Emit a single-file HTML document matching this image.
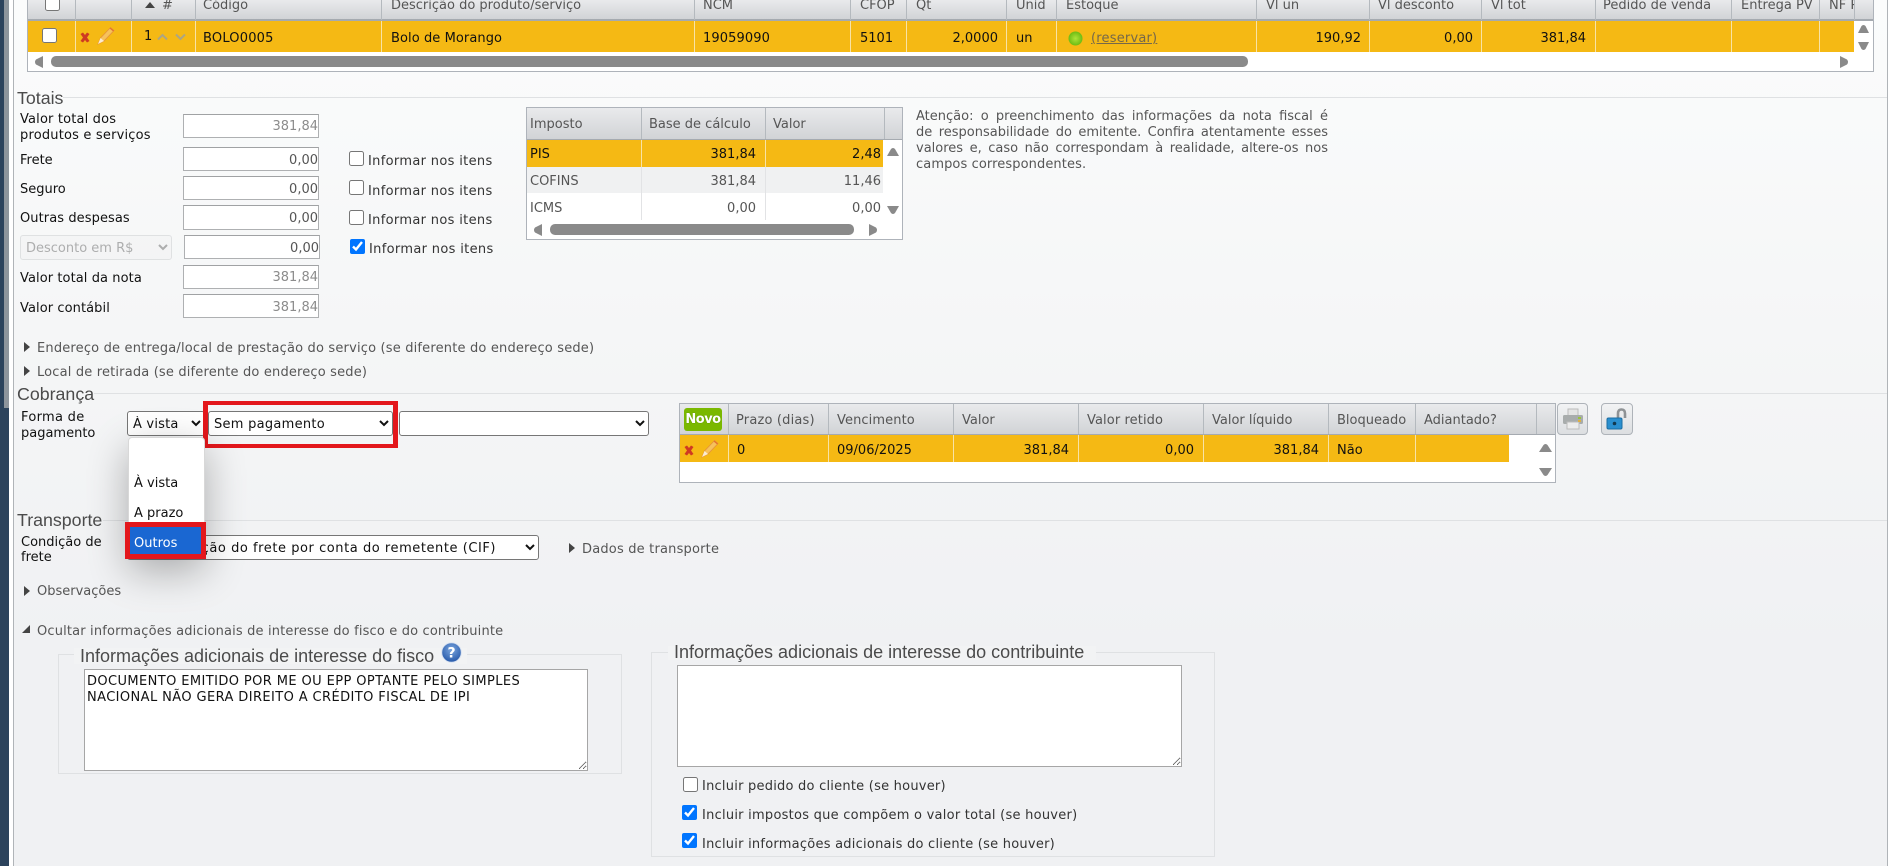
<!DOCTYPE html>
<html lang="pt-BR"><head><meta charset="utf-8"><title>Nota fiscal</title>
<style>
html,body{margin:0;padding:0;width:1890px;height:866px;overflow:hidden;background:#fff}
body{position:relative;font:13px/16px "DejaVu Sans",sans-serif;color:#222}
div,span,svg,input,select,textarea{position:absolute;box-sizing:border-box}
.t{white-space:nowrap;font:13px/16px "DejaVu Sans",sans-serif;margin-top:1px}
.r{text-align:right}
.g{color:#555}
.k{color:#111}
.leg{white-space:nowrap;font:17.8px/20px "Liberation Sans",sans-serif;color:#4b4b4b}
.hr{height:1px;background:#dfe1e3}
.in{background:#fff;border:1px solid #aeb0b2;border-top-color:#a0a2a4;text-align:right;color:#555;font:13px/24px "DejaVu Sans",sans-serif;padding-right:0}
.in.dis{color:#8c8c8c}
.hd{background:linear-gradient(#e9eaec,#d1d3d6)}
.vs{width:1px;background:#b4b9be}
.vw{width:1px;background:#f8e3a6}
.cb{margin:0;accent-color:#0075ff;width:15px;height:15px}
select{margin:0;background:#fff;border:1px solid #767676;border-radius:3px;font:13px "DejaVu Sans",sans-serif;color:#111;padding:2px 0 0 1px}
.red{border:solid #e3171c}
.tri{width:0;height:0;border-style:solid;border-color:transparent transparent transparent #444;border-width:5px 0 5px 6px}
.fs{border:1px solid #dfe1e3}
textarea{margin:0;background:#fff;border:1px solid #a6a6a6;font:13px/16px "DejaVu Sans",sans-serif;color:#111;padding:4px 2px;resize:both;border-radius:0;letter-spacing:.4px;overflow:hidden}
.btn{background:linear-gradient(#f2f3f4,#dcdee1);border:1px solid #aeb3b9;border-radius:4px}
.at{left:916px;width:412px;white-space:normal;text-align:justify;text-align-last:justify;color:#555;font:13px/16px "DejaVu Sans",sans-serif}
</style></head><body>

<!-- left strip + page bg -->
<div style="left:0;top:0;width:9px;height:866px;background:#2c435c"></div>
<div style="left:4px;top:0;width:5px;height:408px;background:#8e959c"></div>
<div style="left:9px;top:0;width:4px;height:866px;background:#fff"></div>
<div style="left:13px;top:0;width:1875px;height:866px;background:linear-gradient(#fbfcfc,#f4f5f6 45%,#f0f1f3 75%);border-left:1px solid #b0b4b8;border-right:1px solid #b0b4b8"></div>

<!-- top table -->
<div style="left:27px;top:0;width:1847px;height:72px;background:#fff;border:1px solid #aeb3ba;border-top:0"></div>
<div class="hd" style="left:28px;top:0;width:1845px;height:21px;border-bottom:2px solid #a5aab0"></div>
<div style="left:28px;top:21px;width:1826px;height:31px;background:#f5b914"></div>
<div class="vs" style="left:75px;top:0;height:20px"></div><div class="vs" style="left:131px;top:0;height:20px"></div><div class="vs" style="left:195px;top:0;height:20px"></div><div class="vs" style="left:381px;top:0;height:20px"></div><div class="vs" style="left:694px;top:0;height:20px"></div><div class="vs" style="left:850px;top:0;height:20px"></div><div class="vs" style="left:906px;top:0;height:20px"></div><div class="vs" style="left:1006px;top:0;height:20px"></div><div class="vs" style="left:1056px;top:0;height:20px"></div><div class="vs" style="left:1256px;top:0;height:20px"></div><div class="vs" style="left:1369px;top:0;height:20px"></div><div class="vs" style="left:1481px;top:0;height:20px"></div><div class="vs" style="left:1595px;top:0;height:20px"></div><div class="vs" style="left:1731px;top:0;height:20px"></div><div class="vs" style="left:1819px;top:0;height:20px"></div><div class="vs" style="left:1854px;top:0;height:20px"></div>
<div class="vw" style="left:75px;top:21px;height:31px"></div><div class="vw" style="left:131px;top:21px;height:31px"></div><div class="vw" style="left:195px;top:21px;height:31px"></div><div class="vw" style="left:381px;top:21px;height:31px"></div><div class="vw" style="left:694px;top:21px;height:31px"></div><div class="vw" style="left:850px;top:21px;height:31px"></div><div class="vw" style="left:906px;top:21px;height:31px"></div><div class="vw" style="left:1006px;top:21px;height:31px"></div><div class="vw" style="left:1056px;top:21px;height:31px"></div><div class="vw" style="left:1256px;top:21px;height:31px"></div><div class="vw" style="left:1369px;top:21px;height:31px"></div><div class="vw" style="left:1481px;top:21px;height:31px"></div><div class="vw" style="left:1595px;top:21px;height:31px"></div><div class="vw" style="left:1731px;top:21px;height:31px"></div><div class="vw" style="left:1819px;top:21px;height:31px"></div>
<input type="checkbox" class="cb" style="left:45px;top:-4px">
<input type="checkbox" class="cb" style="left:42px;top:28px">
<svg style="left:145px;top:2px" width="10" height="6"><path d="M0 6L5 0L10 6Z" fill="#444"/></svg>
<span class="t g" style="left:162px;top:-3px">#</span>
<span class="t g" style="left:203px;top:-3px">Código</span>
<span class="t g" style="left:391px;top:-3px">Descrição do produto/serviço</span>
<span class="t g" style="left:703px;top:-3px">NCM</span>
<span class="t g" style="left:860px;top:-3px">CFOP</span>
<span class="t g" style="left:916px;top:-3px">Qt</span>
<span class="t g" style="left:1016px;top:-3px">Unid</span>
<span class="t g" style="left:1066px;top:-3px">Estoque</span>
<span class="t g" style="left:1266px;top:-3px">Vl un</span>
<span class="t g" style="left:1378px;top:-3px">Vl desconto</span>
<span class="t g" style="left:1491px;top:-3px">Vl tot</span>
<span class="t g" style="left:1603px;top:-3px">Pedido de venda</span>
<span class="t g" style="left:1741px;top:-3px">Entrega PV</span>
<div style="left:1829px;top:0;width:25px;height:20px;overflow:hidden"><span class="t g" style="left:0;top:-3px">NF Pedido</span></div>

<svg style="left:80px;top:32px" width="10" height="11"><path d="M.5 2L3 .5L5 3L7 .5L9.5 2L7 5.5L9.5 9L7 10.5L5 8L3 10.5L.5 9L3 5.5Z" fill="#cf3a22"/></svg>
<svg style="left:96px;top:26px" width="20" height="20"><path d="M2 18L4.5 12L14.5 1.5L18 4.5L8 15Z" fill="#f6c25c" stroke="#e6923a" stroke-width=".8"/><path d="M2 18L4.5 12L8 15Z" fill="#fbecd0"/><path d="M14 2L17.6 5" stroke="#e5752f" stroke-width="1.4"/></svg>
<span class="t k" style="left:144px;top:28px">1</span>
<svg style="left:157px;top:33px" width="11" height="8"><path d="M1 6.5L5.5 2L10 6.5" fill="none" stroke="#aca584" stroke-width="2"/></svg>
<svg style="left:175px;top:33px" width="11" height="8"><path d="M1 1.5L5.5 6L10 1.5" fill="none" stroke="#aca584" stroke-width="2"/></svg>
<span class="t k" style="left:203px;top:30px;letter-spacing:.2px">BOLO0005</span>
<span class="t k" style="left:391px;top:30px;letter-spacing:.08px">Bolo de Morango</span>
<span class="t k" style="left:703px;top:30px;letter-spacing:.1px">19059090</span>
<span class="t k" style="left:860px;top:30px">5101</span>
<span class="t k r" style="left:906px;top:30px;width:92px">2,0000</span>
<span class="t k" style="left:1016px;top:30px">un</span>
<svg style="left:1068px;top:31px" width="15" height="15"><defs><radialGradient id="led"><stop offset="0" stop-color="#aee338"/><stop offset="1" stop-color="#6cbc14"/></radialGradient></defs><circle cx="7.5" cy="7.5" r="7" fill="url(#led)"/></svg>
<span class="t" style="left:1091px;top:30px;color:#75684a;text-decoration:underline;letter-spacing:.2px">(reservar)</span>
<span class="t k r" style="left:1256px;top:30px;width:105px">190,92</span>
<span class="t k r" style="left:1369px;top:30px;width:104px">0,00</span>
<span class="t k r" style="left:1481px;top:30px;width:105px">381,84</span>
<svg style="left:34px;top:56px" width="10" height="12"><path d="M9 0V12L2 8.5Q0 6 2 3.5Z" fill="#8a8a8a"/></svg>
<div style="left:51px;top:56px;width:1197px;height:11px;background:#8a8a8a;border-radius:5px"></div>
<svg style="left:1839px;top:56px" width="10" height="12"><path d="M1 0V12L8 8.5Q10 6 8 3.5Z" fill="#8a8a8a"/></svg>
<svg style="left:1858px;top:24px" width="11" height="10"><path d="M0 9L3.5 2Q5.5 0 7.5 2L11 9Z" fill="#8a8a8a"/></svg>
<svg style="left:1858px;top:41px" width="11" height="10"><path d="M0 1L3.5 8Q5.5 10 7.5 8L11 1Z" fill="#8a8a8a"/></svg>

<!-- Totais -->
<div class="hr" style="left:63px;top:97px;width:1824px"></div>
<span class="leg" style="left:17px;top:88px">Totais</span>
<span class="t k" style="left:20px;top:111px;letter-spacing:.16px">Valor total dos</span>
<span class="t k" style="left:20px;top:127px;letter-spacing:.19px">produtos e serviços</span>
<span class="t k" style="left:20px;top:152px">Frete</span>
<span class="t k" style="left:20px;top:181px">Seguro</span>
<span class="t k" style="left:20px;top:210px;letter-spacing:.08px">Outras despesas</span>
<span class="t k" style="left:20px;top:270px;letter-spacing:.08px">Valor total da nota</span>
<span class="t k" style="left:20px;top:300px;letter-spacing:.08px">Valor contábil</span>
<div class="in dis" style="left:183px;top:114px;width:136px;height:24px">381,84</div>
<div class="in" style="left:183px;top:147px;width:136px;height:24px;line-height:26px">0,00</div>
<div class="in" style="left:183px;top:176px;width:136px;height:24px;line-height:26px">0,00</div>
<div class="in" style="left:183px;top:205px;width:136px;height:25px;line-height:26px">0,00</div>
<select disabled style="left:20px;top:235px;width:152px;height:25px;border-color:#d6d8da;background:#f3f4f5;color:#8f8f8f"><option>Desconto em R$</option></select>
<div class="in" style="left:184px;top:235px;width:136px;height:24px;line-height:26px">0,00</div>
<div class="in dis" style="left:183px;top:265px;width:136px;height:24px">381,84</div>
<div class="in dis" style="left:183px;top:294px;width:136px;height:24px;line-height:26px">381,84</div>
<input type="checkbox" class="cb" style="left:349px;top:151px"><span class="t k" style="left:368px;top:153px;color:#333;letter-spacing:.33px">Informar nos itens</span>
<input type="checkbox" class="cb" style="left:349px;top:180px"><span class="t k" style="left:368px;top:183px;color:#333;letter-spacing:.33px">Informar nos itens</span>
<input type="checkbox" class="cb" style="left:349px;top:210px"><span class="t k" style="left:368px;top:212px;color:#333;letter-spacing:.33px">Informar nos itens</span>
<input type="checkbox" class="cb" checked style="left:350px;top:239px"><span class="t k" style="left:369px;top:241px;color:#333;letter-spacing:.33px">Informar nos itens</span>

<!-- imposto table -->
<div style="left:526px;top:107px;width:377px;height:133px;background:#fff;border:1px solid #aeb3ba"></div>
<div class="hd" style="left:527px;top:108px;width:375px;height:32px;border-bottom:1px solid #a5aab0"></div>
<div style="left:527px;top:140px;width:356px;height:27px;background:#f5b914"></div>
<div style="left:527px;top:167px;width:356px;height:26px;background:#f0f1f2"></div>
<div class="vs" style="left:641px;top:108px;height:31px"></div><div class="vs" style="left:765px;top:108px;height:31px"></div><div class="vs" style="left:884px;top:108px;height:31px"></div>
<div class="vw" style="left:641px;top:140px;height:27px"></div><div class="vw" style="left:765px;top:140px;height:27px"></div>
<div style="left:641px;top:167px;height:53px;width:1px;background:#e2e3e5"></div><div style="left:765px;top:167px;height:53px;width:1px;background:#e2e3e5"></div>
<span class="t g" style="left:530px;top:116px">Imposto</span>
<span class="t g" style="left:649px;top:116px">Base de cálculo</span>
<span class="t g" style="left:773px;top:116px">Valor</span>
<span class="t k" style="left:530px;top:146px">PIS</span>
<span class="t k r" style="left:641px;top:146px;width:115px">381,84</span>
<span class="t k r" style="left:765px;top:146px;width:116px">2,48</span>
<span class="t g" style="left:530px;top:173px">COFINS</span>
<span class="t g r" style="left:641px;top:173px;width:115px">381,84</span>
<span class="t g r" style="left:765px;top:173px;width:116px">11,46</span>
<span class="t g" style="left:530px;top:200px">ICMS</span>
<span class="t g r" style="left:641px;top:200px;width:115px">0,00</span>
<span class="t g r" style="left:765px;top:200px;width:116px">0,00</span>
<svg style="left:887px;top:147px" width="12" height="10"><path d="M0 9L4 2Q6 0 8 2L12 9Z" fill="#8a8a8a"/></svg>
<svg style="left:887px;top:205px" width="12" height="10"><path d="M0 1L4 8Q6 10 8 8L12 1Z" fill="#8a8a8a"/></svg>
<svg style="left:533px;top:224px" width="10" height="12"><path d="M9 0V12L2 8.5Q0 6 2 3.5Z" fill="#8a8a8a"/></svg>
<div style="left:550px;top:224px;width:304px;height:11px;background:#8a8a8a;border-radius:5px"></div>
<svg style="left:868px;top:224px" width="10" height="12"><path d="M1 0V12L8 8.5Q10 6 8 3.5Z" fill="#8a8a8a"/></svg>

<div class="at" style="top:109px">Atenção: o preenchimento das informações da nota fiscal é</div>
<div class="at" style="top:125px">de responsabilidade do emitente. Confira atentamente esses</div>
<div class="at" style="top:141px">valores e, caso não correspondam à realidade, altere-os nos</div>
<div class="at" style="top:157px;text-align-last:left;letter-spacing:.1px">campos correspondentes.</div>

<!-- expanders -->
<div class="tri" style="left:24px;top:342px"></div>
<span class="t g" style="left:37px;top:340px;letter-spacing:.18px">Endereço de entrega/local de prestação do serviço (se diferente do endereço sede)</span>
<div class="tri" style="left:24px;top:366px"></div>
<span class="t g" style="left:37px;top:364px;letter-spacing:.17px">Local de retirada (se diferente do endereço sede)</span>

<!-- Cobrança -->
<div class="hr" style="left:94px;top:393px;width:1793px"></div>
<span class="leg" style="left:17px;top:384px">Cobrança</span>
<span class="t k" style="left:21px;top:409px;letter-spacing:.3px">Forma de</span>
<span class="t k" style="left:21px;top:425px">pagamento</span>
<select style="left:127px;top:411px;width:78px;height:25px;letter-spacing:.2px"><option>À vista</option></select>
<select style="left:208px;top:411px;width:185px;height:25px;letter-spacing:.27px"><option>Sem pagamento</option></select>
<select style="left:399px;top:411px;width:250px;height:25px"><option></option></select>
<div class="red" style="left:203px;top:401px;width:195px;height:47px;border-width:4px 5px"></div>

<!-- parcelas -->
<div style="left:679px;top:403px;width:877px;height:80px;background:#fff;border:1px solid #aeb3ba"></div>
<div class="hd" style="left:680px;top:404px;width:875px;height:31px;border-bottom:1px solid #a5aab0"></div>
<div style="left:680px;top:435px;width:829px;height:27px;background:#f5b914"></div>
<div class="vs" style="left:728px;top:404px;height:30px"></div><div class="vs" style="left:828px;top:404px;height:30px"></div><div class="vs" style="left:953px;top:404px;height:30px"></div><div class="vs" style="left:1078px;top:404px;height:30px"></div><div class="vs" style="left:1203px;top:404px;height:30px"></div><div class="vs" style="left:1328px;top:404px;height:30px"></div><div class="vs" style="left:1415px;top:404px;height:30px"></div><div class="vs" style="left:1536px;top:404px;height:30px"></div>
<div class="vw" style="left:728px;top:435px;height:27px"></div><div class="vw" style="left:828px;top:435px;height:27px"></div><div class="vw" style="left:953px;top:435px;height:27px"></div><div class="vw" style="left:1078px;top:435px;height:27px"></div><div class="vw" style="left:1203px;top:435px;height:27px"></div><div class="vw" style="left:1328px;top:435px;height:27px"></div><div class="vw" style="left:1415px;top:435px;height:27px"></div>
<div style="left:684px;top:408px;width:38px;height:23px;background:#7ab800;border-radius:3px;color:#fff;font:bold 13px/23px 'DejaVu Sans',sans-serif;text-align:center;white-space:nowrap;letter-spacing:-.5px;text-shadow:0 0 1px #4d7a00">Novo</div>
<span class="t g" style="left:736px;top:412px;letter-spacing:.18px">Prazo (dias)</span>
<span class="t g" style="left:837px;top:412px;letter-spacing:.1px">Vencimento</span>
<span class="t g" style="left:962px;top:412px">Valor</span>
<span class="t g" style="left:1087px;top:412px;letter-spacing:.1px">Valor retido</span>
<span class="t g" style="left:1212px;top:412px">Valor líquido</span>
<span class="t g" style="left:1337px;top:412px">Bloqueado</span>
<span class="t g" style="left:1424px;top:412px">Adiantado?</span>
<svg style="left:684px;top:445px" width="10" height="11"><path d="M.5 2L3 .5L5 3L7 .5L9.5 2L7 5.5L9.5 9L7 10.5L5 8L3 10.5L.5 9L3 5.5Z" fill="#cf3a22"/></svg>
<svg style="left:700px;top:439px" width="20" height="20"><path d="M2 18L4.5 12L14.5 1.5L18 4.5L8 15Z" fill="#f6c25c" stroke="#e6923a" stroke-width=".8"/><path d="M2 18L4.5 12L8 15Z" fill="#fbecd0"/><path d="M14 2L17.6 5" stroke="#e5752f" stroke-width="1.4"/></svg>
<span class="t k" style="left:737px;top:442px">0</span>
<span class="t k" style="left:837px;top:442px">09/06/2025</span>
<span class="t k r" style="left:953px;top:442px;width:116px">381,84</span>
<span class="t k r" style="left:1078px;top:442px;width:116px">0,00</span>
<span class="t k r" style="left:1203px;top:442px;width:116px">381,84</span>
<span class="t k" style="left:1337px;top:442px">Não</span>
<svg style="left:1539px;top:443px" width="13" height="10"><path d="M0 9L4.5 2Q6.5 0 8.5 2L13 9Z" fill="#8a8a8a"/></svg>
<svg style="left:1539px;top:467px" width="13" height="10"><path d="M0 1L4.5 8Q6.5 10 8.5 8L13 1Z" fill="#8a8a8a"/></svg>
<div class="btn" style="left:1557px;top:403px;width:31px;height:32px"></div>
<svg style="left:1562px;top:408px" width="22" height="22"><rect x="6" y="1" width="10" height="7" fill="#e4e4e4" stroke="#bbb"/><rect x="1" y="7" width="20" height="9" rx="1.5" fill="#a8acac"/><rect x="5" y="14" width="12" height="7" fill="#ececec" stroke="#bbb"/><rect x="16" y="9" width="3" height="2" fill="#9bc43a"/><rect x="16" y="12" width="3" height="2" fill="#e0b040"/></svg>
<div class="btn" style="left:1601px;top:403px;width:32px;height:32px"></div>
<svg style="left:1606px;top:408px" width="22" height="23"><path d="M12 11V5.5Q12 1.5 15.5 1.5Q19 1.5 19 5.5V10" fill="none" stroke="#8e9295" stroke-width="2.6"/><rect x="1" y="10" width="15" height="11" rx="1.5" fill="#2a8fcf" stroke="#1b6da3"/><circle cx="8.5" cy="15.5" r="1.8" fill="#12384f"/></svg>

<!-- Transporte -->
<div class="hr" style="left:103px;top:520px;width:1784px"></div>
<span class="leg" style="left:17px;top:510px">Transporte</span>
<span class="t k" style="left:21px;top:534px">Condição de</span>
<span class="t k" style="left:21px;top:549px">frete</span>
<select style="left:127px;top:535px;width:412px;height:25px"><option></option></select>
<span class="t k r" style="left:127px;top:540px;width:369px;letter-spacing:.55px">Contratação do frete por conta do remetente (CIF)</span>
<div class="tri" style="left:569px;top:543px"></div>
<span class="t g" style="left:582px;top:541px;letter-spacing:.19px">Dados de transporte</span>
<div class="tri" style="left:24px;top:586px"></div>
<span class="t g" style="left:37px;top:583px">Observações</span>

<!-- dropdown -->
<div style="left:128px;top:437px;width:77px;height:122px;background:#fff;border:1px solid #d8d8d8;border-radius:4px 4px 0 0;box-shadow:0 12px 40px rgba(0,0,0,.3)"></div>
<span class="t k" style="left:134px;top:475px">À vista</span>
<span class="t k" style="left:134px;top:505px">A prazo</span>
<div style="left:130px;top:526px;width:72px;height:29px;background:#1a67d2"></div>
<span class="t" style="left:134px;top:535px;color:#fff">Outros</span>
<div class="red" style="left:125px;top:522px;width:81px;height:37px;border-width:5px"></div>

<!-- informações adicionais -->
<svg style="left:22px;top:625px" width="9" height="9"><path d="M0 8L8 8L8 0Z" fill="#444"/></svg>
<span class="t g" style="left:37px;top:623px;letter-spacing:.16px">Ocultar informações adicionais de interesse do fisco e do contribuinte</span>

<div class="fs" style="left:58px;top:654px;width:564px;height:120px"></div>
<div style="left:74px;top:648px;width:393px;height:16px;background:#f2f3f4"></div>
<span class="leg" style="left:80px;top:646px;font-size:18px">Informações adicionais de interesse do fisco</span>
<svg style="left:441px;top:642px" width="21" height="21"><defs><radialGradient id="hp" cx=".5" cy=".35" r=".7"><stop offset="0" stop-color="#7ba6de"/><stop offset="1" stop-color="#1f52a5"/></radialGradient></defs><circle cx="10.5" cy="10.5" r="9.8" fill="url(#hp)" stroke="#d8e2f1"/><text x="10.5" y="15.5" text-anchor="middle" font-family="DejaVu Sans" font-size="14" font-weight="bold" fill="#fff">?</text></svg>
<textarea style="left:84px;top:669px;width:504px;height:102px">DOCUMENTO EMITIDO POR ME OU EPP OPTANTE PELO SIMPLES
NACIONAL NÃO GERA DIREITO A CRÉDITO FISCAL DE IPI</textarea>

<div class="fs" style="left:651px;top:652px;width:564px;height:205px"></div>
<div style="left:668px;top:646px;width:428px;height:14px;background:#f2f3f4"></div>
<span class="leg" style="left:674px;top:642px;font-size:18px">Informações adicionais de interesse do contribuinte</span>
<textarea style="left:677px;top:665px;width:505px;height:102px"></textarea>
<input type="checkbox" class="cb" style="left:683px;top:777px"><span class="t k" style="left:702px;top:778px;color:#333;letter-spacing:.23px">Incluir pedido do cliente (se houver)</span>
<input type="checkbox" class="cb" checked style="left:682px;top:805px"><span class="t k" style="left:702px;top:807px;color:#333;letter-spacing:.25px">Incluir impostos que compõem o valor total (se houver)</span>
<input type="checkbox" class="cb" checked style="left:682px;top:833px"><span class="t k" style="left:702px;top:836px;color:#333;letter-spacing:.24px">Incluir informações adicionais do cliente (se houver)</span>
</body></html>
